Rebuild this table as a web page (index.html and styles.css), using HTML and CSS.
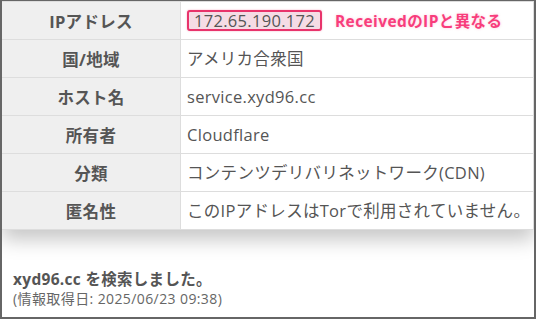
FILE: index.html
```html
<!DOCTYPE html>
<html lang="ja">
<head>
<meta charset="utf-8">
<link rel="stylesheet" href="styles.css">
</head>
<body>
<div class="frame">
  <table class="info">
    <tr>
      <th>IPアドレス</th>
      <td><span class="ip">172.65.190.172</span><span class="note">ReceivedのIPと異なる</span></td>
    </tr>
    <tr><th>国/地域</th><td>アメリカ合衆国</td></tr>
    <tr><th>ホスト名</th><td>service.xyd96.cc</td></tr>
    <tr><th>所有者</th><td>Cloudflare</td></tr>
    <tr><th>分類</th><td>コンテンツデリバリネットワーク(CDN)</td></tr>
    <tr><th>匿名性</th><td>このIPアドレスはTorで利用されていません。</td></tr>
  </table>
  <div class="result">
    <p class="searched">xyd96.cc を検索しました。</p>
    <p class="date">(情報取得日: 2025/06/23 09:38)</p>
  </div>
</div>
</body>
</html>
```

FILE: styles.css
```css
html, body {
  margin: 0;
  padding: 0;
  background: #fff;
}
.frame {
  box-sizing: border-box;
  width: 536px;
  height: 319px;
  border: 2px solid #666;
  border-top-width: 1px;
  overflow: hidden;
  font-family: "Open Sans", "Noto Sans CJK JP", sans-serif;
  color: #555;
}
.info {
  width: 100%;
  border-collapse: collapse;
  border-top: 1px solid #ddd;
  border-right: 1px solid #ddd;
  box-shadow: 0 10px 18px rgba(0, 0, 0, 0.22);
  background: #fff;
  font-size: 16.5px;
  letter-spacing: 0.3px;
}
.info tr {
  height: 38px;
  border-bottom: 1px solid #ddd;
}
.info th {
  width: 178px;
  background: #efefef;
  font-weight: bold;
  text-align: center;
  border-right: 1px solid #ddd;
  padding: 0;
  color: #555;
}
.info td {
  padding: 0 0 0 6px;
  text-align: left;
  font-weight: normal;
  line-height: 20px;
}
.ip {
  display: inline-block;
  border: 2px solid #e8336b;
  border-radius: 3px;
  background: #f5dce5;
  padding: 0 5px 0 5px;
  line-height: 17px;
  color: #555;
  box-shadow: 0 0 2px rgba(232, 51, 107, 0.4);
}
.note {
  margin-left: 13px;
  color: #f83d7c;
  font-weight: bold;
  font-size: 15.5px;
  letter-spacing: 0.4px;
  text-shadow: 0 0 3px rgba(244, 58, 120, 0.25);
}
.result {
  padding: 38px 10px 0 11px;
}
.result p {
  margin: 0;
}
.searched {
  font-size: 15.5px;
  font-weight: bold;
  line-height: 22px;
  letter-spacing: 0.3px;
}
.date {
  font-size: 14px;
  line-height: 18px;
  color: #666;
  margin-top: 0;
  letter-spacing: 0.4px;
}
```
